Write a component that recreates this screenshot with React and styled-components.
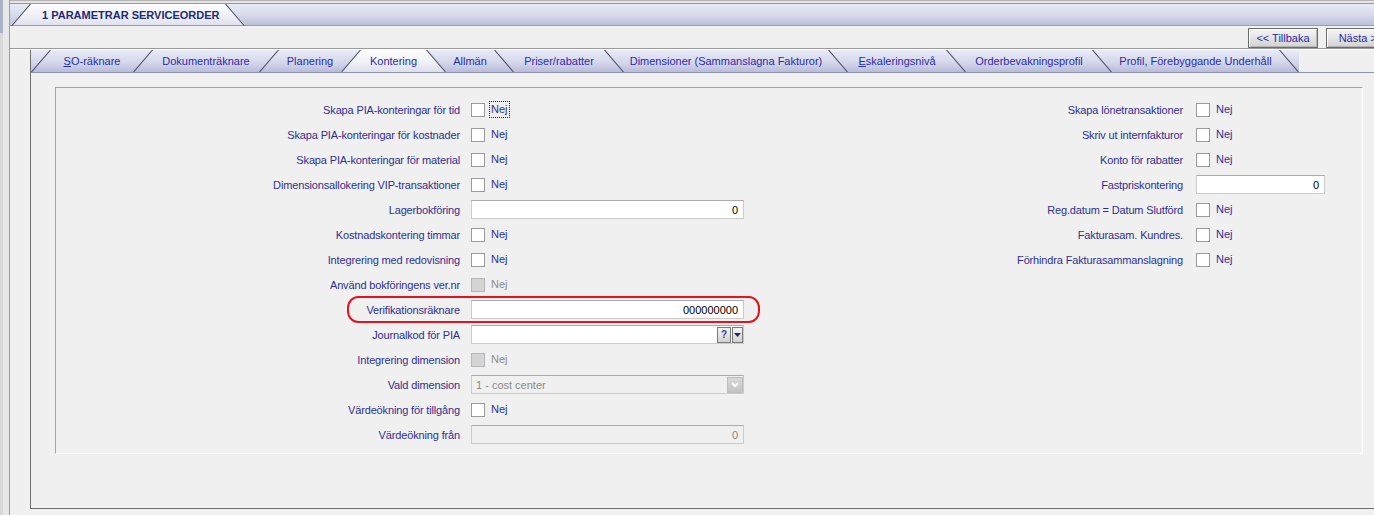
import React from 'react'
import styled, { createGlobalStyle, css } from 'styled-components'

const GlobalStyle = createGlobalStyle`
  html, body {
    margin: 0;
    padding: 0;
    background: #f0f0f0;
    overflow: hidden;
  }
  body {
    font-family: "Liberation Sans", Arial, sans-serif;
    font-size: 11px;
  }
`

const Screen = styled.div`
  display: flex;
  width: 1374px;
  height: 515px;
  overflow: hidden;
  background: #f0f0f0;
`

const LeftRail = styled.div`
  width: 9px;
  flex: none;
  border-right: 1px solid #9c9c9c;
  background: linear-gradient(#aab3c6, #aab3c6) no-repeat 0 0 / 3px 33px,
    linear-gradient(to right, #d8d8d8 0, #d8d8d8 3px, #e8e8e8 3px);
`

const Main = styled.div`
  flex: 1;
  display: flex;
  flex-direction: column;
  min-width: 0;
`

const TopRule = styled.div`
  height: 2px;
  border-top: 1px solid #b4b4b4;
  border-bottom: 1px solid #9a9a9a;
  background: #e4e4e4;
`

const TitleBar = styled.div`
  height: 21px;
  display: flex;
  background: linear-gradient(#e7eaf6, #d6d9ec 55%, #bcc0db);
  border-bottom: 1px solid #9a9db8;
`

const TitleTab = styled.div`
  position: relative;
  display: flex;
  width: 234px;
  margin-left: 1px;
  &::before {
    content: '';
    position: absolute;
    inset: 0;
    background: linear-gradient(#fdfdfe, #eeeff6 60%, #dfe1ee);
    clip-path: polygon(0 100%, 19px 0, calc(100% - 19px) 0, 100% 100%);
  }
`

const TitleText = styled.div`
  position: relative;
  flex: 1;
  display: flex;
  align-items: center;
  padding-left: 11px;
  font-weight: 700;
  font-size: 11px;
  color: #1d2b74;
  white-space: nowrap;
`

const ButtonBar = styled.div`
  height: 22px;
  display: flex;
  justify-content: flex-end;
  align-items: flex-end;
  gap: 8px;
  margin-right: -22px;
  border-bottom: 1px solid #9a9a9a;
  box-shadow: 0 1px 0 #ffffff;
`

const NavButton = styled.button`
  width: 70px;
  height: 20px;
  padding: 0;
  font-family: inherit;
  font-size: 11px;
  color: #2a2aa4;
  border: 1px solid #6c6c6c;
  box-shadow: inset 1px 1px 0 #ffffff, inset -1px -1px 0 #b4b4b4;
  background: linear-gradient(#f6f6f6, #e4e4e4 50%, #d2d2d2);
  white-space: nowrap;
`

const Body = styled.div`
  flex: 1;
  padding: 1px 0 0 20px;
`

const TabContainer = styled.div`
  border-left: 1px solid #6e6e6e;
  border-bottom: 1px solid #6e6e6e;
`

const TabRow = styled.div`
  height: 22px;
  display: flex;
  border-bottom: 1px solid #9194ae;
`

const TabStrip = styled.div`
  display: flex;
  background: linear-gradient(#e9ebf7, #d5d8ec 55%, #b9bcd8);
`

const Tab = styled.div`
  position: relative;
  display: flex;
  width: ${p => p.$w}px;
  height: 22px;
  ${p => p.$active && css`
    &::before {
      content: '';
      position: absolute;
      inset: 0;
      background: linear-gradient(#fefefe, #f0f1f6 55%, #dcdfec);
      clip-path: polygon(0 100%, 19px 0, calc(100% - 19px) 0, 100% 100%);
    }
  `}
`

const TabLabel = styled.div`
  position: relative;
  flex: 1;
  display: flex;
  align-items: center;
  justify-content: center;
  color: #2b2ba8;
  font-size: 11px;
  white-space: nowrap;
  u {
    text-decoration: underline;
  }
`

const SlantSvg = styled.svg`
  position: relative;
  flex: none;
  display: block;
  width: 20px;
  height: 22px;
`

const Content = styled.div`
  padding: 14px 11px 54px 24px;
`

const Panel = styled.div`
  display: flex;
  padding: 9px 0 6px;
  border: 1px solid #a2a2a2;
  border-right-color: #ffffff;
  border-bottom-color: #ffffff;
`

const Column = styled.div`
  display: flex;
  flex-direction: column;
`

const Row = styled.div`
  position: relative;
  display: grid;
  grid-template-columns: ${p => p.$label}px ${p => p.$control}px;
  column-gap: ${p => p.$gap}px;
  align-items: center;
  height: 25px;
`

const Label = styled.div`
  text-align: right;
  color: #2f2f90;
  white-space: nowrap;
  letter-spacing: -0.15px;
`

const Highlight = styled.div`
  position: absolute;
  left: 291px;
  right: -16px;
  top: -1px;
  bottom: -1px;
  border: 2px solid #e4141e;
  border-radius: 11px / 12px;
  pointer-events: none;
`

const CheckWrap = styled.div`
  display: flex;
  align-items: center;
  gap: 4px;
`

const Box = styled.span`
  width: 14px;
  height: 14px;
  box-sizing: border-box;
  border: 1px solid ${p => (p.$disabled ? '#b6b6b6' : '#9a9a9a')};
  background: ${p => (p.$disabled ? '#d4d4d4' : '#ffffff')};
`

const CheckText = styled.span`
  color: ${p => (p.$disabled ? '#8c8c8c' : '#2f2f90')};
  padding: 1px 1px;
  border: 1px dotted ${p => (p.$focused ? '#222222' : 'transparent')};
  line-height: 13px;
`

const Field = styled.div`
  display: flex;
  align-items: center;
  height: 19px;
  box-sizing: border-box;
  border: 1px solid #cbcbcb;
  border-top-color: #acacac;
  background: ${p => (p.$disabled ? '#f0f0f0' : '#ffffff')};
  color: ${p => (p.$disabled ? '#8a8a8a' : '#000000')};
  padding: 0 ${p => (p.$lookup ? '0' : '5px')} 0 4px;
`

const FieldValue = styled.span`
  flex: 1;
  text-align: ${p => (p.$left ? 'left' : 'right')};
  white-space: nowrap;
`

const SmallButton = styled.span`
  display: flex;
  align-items: center;
  justify-content: center;
  width: ${p => p.$w}px;
  height: 16px;
  box-sizing: border-box;
  margin-left: 1px;
  border: 1px solid #7a7a7a;
  background: linear-gradient(#f4f4f4, #d0d0d0);
  color: #3b3b9a;
  font-size: 10px;
  font-weight: 700;
`

const DisabledButton = styled.span`
  display: flex;
  align-items: center;
  justify-content: center;
  width: 16px;
  height: 16px;
  box-sizing: border-box;
  border: 1px solid #bdbdbd;
  background: linear-gradient(#d8d8d8, #c4c4c4);
`

const tabs = [
  { label: <><u>S</u>O-räknare</>, w: 102 },
  { label: 'Dokumenträknare', w: 126 },
  { label: 'Planering', w: 82 },
  { label: 'Kontering', w: 105, active: true },
  { label: 'Allmän', w: 68 },
  { label: 'Priser/rabatter', w: 110 },
  { label: 'Dimensioner (Sammanslagna Fakturor)', w: 224 },
  { label: <><u>E</u>skaleringsnivå</>, w: 118 },
  { label: 'Orderbevakningsprofil', w: 146 },
  { label: 'Profil, Förebyggande Underhåll', w: 187 },
]

const leftRows = [
  { label: 'Skapa PIA-konteringar för tid', type: 'check', focused: true },
  { label: 'Skapa PIA-konteringar för kostnader', type: 'check' },
  { label: 'Skapa PIA-konteringar för material', type: 'check' },
  { label: 'Dimensionsallokering VIP-transaktioner', type: 'check' },
  { label: 'Lagerbokföring', type: 'input', value: '0' },
  { label: 'Kostnadskontering timmar', type: 'check' },
  { label: 'Integrering med redovisning', type: 'check' },
  { label: 'Använd bokföringens ver.nr', type: 'check', disabled: true },
  { label: 'Verifikationsräknare', type: 'input', value: '000000000', highlight: true },
  { label: 'Journalkod för PIA', type: 'lookup' },
  { label: 'Integrering dimension', type: 'check', disabled: true },
  { label: 'Vald dimension', type: 'select', value: '1 - cost center', disabled: true },
  { label: 'Värdeökning för tillgång', type: 'check' },
  { label: 'Värdeökning från', type: 'input', value: '0', disabled: true },
]

const rightRows = [
  { label: 'Skapa lönetransaktioner', type: 'check' },
  { label: 'Skriv ut internfakturor', type: 'check' },
  { label: 'Konto för rabatter', type: 'check' },
  { label: 'Fastpriskontering', type: 'input', value: '0' },
  { label: 'Reg.datum = Datum Slutförd', type: 'check' },
  { label: 'Fakturasam. Kundres.', type: 'check' },
  { label: 'Förhindra Fakturasammanslagning', type: 'check' },
]

function Slant({ up }) {
  return (
    <SlantSvg viewBox="0 0 20 22">
      {up
        ? <line x1="0.5" y1="22" x2="19.5" y2="0" stroke="#4e4f62" strokeWidth="1.1" />
        : <line x1="0.5" y1="0" x2="19.5" y2="22" stroke="#4e4f62" strokeWidth="1.1" />}
    </SlantSvg>
  )
}

function Control({ row }) {
  if (row.type === 'check') {
    return (
      <CheckWrap>
        <Box $disabled={row.disabled} />
        <CheckText $disabled={row.disabled} $focused={row.focused}>Nej</CheckText>
      </CheckWrap>
    )
  }
  if (row.type === 'lookup') {
    return (
      <Field $lookup>
        <FieldValue />
        <SmallButton $w={14}>?</SmallButton>
        <SmallButton $w={11}>
          <svg width="7" height="4" viewBox="0 0 7 4"><path d="M0 0h7L3.5 4z" fill="#1f2a6e" /></svg>
        </SmallButton>
      </Field>
    )
  }
  if (row.type === 'select') {
    return (
      <Field $disabled $lookup>
        <FieldValue $left>{row.value}</FieldValue>
        <DisabledButton>
          <svg width="8" height="6" viewBox="0 0 8 6"><path d="M1 1l3 3 3-3" stroke="#ffffff" strokeWidth="2" fill="none" /></svg>
        </DisabledButton>
      </Field>
    )
  }
  return (
    <Field $disabled={row.disabled}>
      <FieldValue>{row.value}</FieldValue>
    </Field>
  )
}

export default function App() {
  const activeIndex = tabs.findIndex(t => t.active)
  return (
    <Screen>
      <GlobalStyle />
      <LeftRail />
      <Main>
        <TopRule />
        <TitleBar>
          <TitleTab>
            <Slant up />
            <TitleText>1 PARAMETRAR SERVICEORDER</TitleText>
            <Slant />
          </TitleTab>
        </TitleBar>
        <ButtonBar>
          <NavButton>&lt;&lt; Tillbaka</NavButton>
          <NavButton>Nästa &gt;&gt;</NavButton>
        </ButtonBar>
        <Body>
          <TabContainer>
            <TabRow>
              <TabStrip>
                {tabs.map((t, i) => (
                  <Tab key={i} $w={t.w} $active={t.active}>
                    {i <= activeIndex && <Slant up />}
                    <TabLabel>{t.label}</TabLabel>
                    {i >= activeIndex && <Slant />}
                  </Tab>
                ))}
              </TabStrip>
            </TabRow>
            <Content>
              <Panel>
                <Column>
                  {leftRows.map((r, i) => (
                    <Row key={i} $label={404} $control={273} $gap={11}>
                      <Label>{r.label}</Label>
                      <Control row={r} />
                      {r.highlight && <Highlight />}
                    </Row>
                  ))}
                </Column>
                <Column>
                  {rightRows.map((r, i) => (
                    <Row key={i} $label={439} $control={129} $gap={13}>
                      <Label>{r.label}</Label>
                      <Control row={r} />
                    </Row>
                  ))}
                </Column>
              </Panel>
            </Content>
          </TabContainer>
        </Body>
      </Main>
    </Screen>
  )
}
